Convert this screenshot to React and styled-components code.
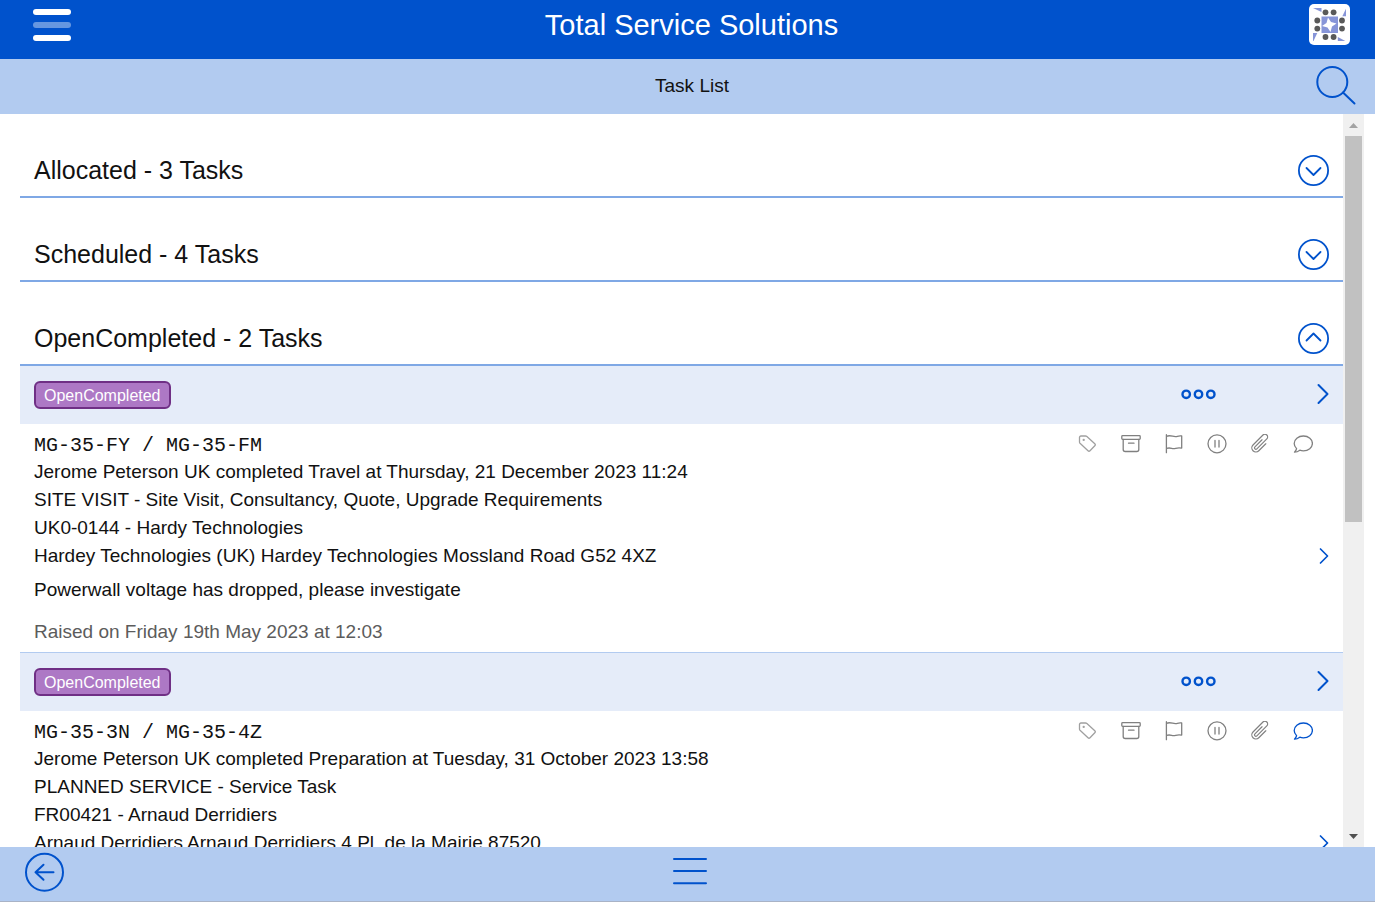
// Task list page with collapsible groups of tasks
import React, { useState } from "react"
import styled, { createGlobalStyle, ThemeProvider } from "styled-components"

const theme = {
  colors: {
    primary: "#0052cc",
    bar: "#b2cbf0",
    row: "#e5ecf9",
    line: "#7fa8e5",
    text: "#111111",
    muted: "#5c5c5c",
    icon: "#808080",
    white: "#ffffff",
    badge: "#ad78c5",
    badgeBorder: "#6f2f85",
  },
}

const GlobalStyle = createGlobalStyle`
  * {
    box-sizing: border-box;
  }

  body {
    margin: 0;
    background: #ffffff;
    color: #111111;
    font-family: "Liberation Sans", Arial, sans-serif;
    font-size: 19px;
    line-height: 28px;
  }

  h1, h2, p {
    margin: 0;
    font-weight: 400;
  }

  svg {
    display: block;
  }
`

const Page = styled.div`
  display: flex;
  flex-direction: column;
  height: 100vh;
`

const Bar = styled.div`
  display: grid;
  grid-template-columns: 1fr auto 1fr;
  align-items: center;
  flex: none;
  background: ${props => props.theme.colors.bar};
`

const Header = styled(Bar)`
  height: 59px;
  padding: 0 25px 10px 33px;
  background: ${props => props.theme.colors.primary};
  color: ${props => props.theme.colors.white};

  h1 {
    font-size: 29px;
  }
`

const SubHeader = styled(Bar)`
  height: 55px;
  padding: 0 19px 2px 28px;

  h2 {
    grid-column: 2;
    font-size: 19px;
  }
`

const Footer = styled(Bar)`
  height: 55px;
  padding: 0 20px 4px 25px;
  border-bottom: 1px solid #a9b3c6;
`

const IconButton = styled.button`
  display: block;
  justify-self: ${props => (props.$end ? "end" : "start")};
  padding: 0;
  border: none;
  background: none;
  color: ${props => props.theme.colors.primary};
  cursor: pointer;
`

const Content = styled.div`
  display: flex;
  flex: 1;
  min-height: 0;
  padding: 0 11px 0 20px;
`

const List = styled.main`
  flex: 1;
  min-width: 0;
  overflow-y: auto;
  scrollbar-width: none;
`

const ScrollBar = styled.div`
  display: flex;
  flex-direction: column;
  width: 21px;
  padding: 0 2px;
  background: #f0f0f0;
`

const ScrollArrow = styled.div`
  display: flex;
  flex: none;
  align-items: center;
  justify-content: center;
  height: 22px;
  color: ${props => (props.$active ? "#505050" : "#a3a3a3")};
`

const ScrollTrack = styled.div`
  flex: 1;
`

const ScrollThumb = styled.div`
  height: 56%;
  background: #c1c1c1;
`

const GroupHeader = styled.button`
  display: flex;
  align-items: center;
  justify-content: space-between;
  width: 100%;
  margin-top: 30px;
  padding: 10px 14px;
  border: none;
  border-bottom: 2px solid ${props => props.theme.colors.line};
  background: none;
  color: ${props => props.theme.colors.text};
  font-family: inherit;
  font-size: 25px;
  line-height: 32px;
  text-align: left;
  cursor: pointer;

  svg {
    color: ${props => props.theme.colors.primary};
  }
`

const Task = styled.article`
  & + & {
    border-top: 1px solid ${props => props.theme.colors.bar};
  }
`

const TaskBar = styled.div`
  display: flex;
  align-items: center;
  height: 58px;
  padding: 0 14px;
  background: ${props => props.theme.colors.row};
`

const Badge = styled.span`
  margin-right: auto;
  padding: 1px 8px 0;
  border: 2px solid ${props => props.theme.colors.badgeBorder};
  border-radius: 6px;
  background: ${props => props.theme.colors.badge};
  color: ${props => props.theme.colors.white};
  font-size: 16px;
  line-height: 23px;
`

const MoreButton = styled(IconButton)`
  margin-right: 101px;
`

const TaskBody = styled.div`
  padding: 10px 14px 6px;
`

const TopLine = styled.div`
  display: flex;
  justify-content: space-between;
  height: 24px;
`

const Reference = styled.p`
  font-family: "Liberation Mono", monospace;
  font-size: 20px;
  line-height: 24px;
`

const TaskIcons = styled.div`
  display: flex;
  gap: 23px;
  margin-right: 16px;
  color: ${props => props.theme.colors.icon};
`

const TaskIcon = styled.svg`
  width: 20px;
  height: 20px;
  fill: none;
  stroke: ${props =>
    props.$active ? props.theme.colors.primary : "currentColor"};
  stroke-width: 1.3;
  stroke-linecap: round;
  stroke-linejoin: round;
  opacity: ${props => (props.$faint ? 0.75 : 1)};
`

const AddressLine = styled.div`
  display: flex;
  align-items: center;
  justify-content: space-between;
`

const Description = styled.p`
  margin-top: 6px;
`

const Raised = styled.p`
  margin-top: 14px;
  color: ${props => props.theme.colors.muted};
`

const MenuIcon = () => (
  <svg width="38" height="32" viewBox="0 0 38 32" fill="#fff">
    <rect width="38" height="6" rx="3" />
    <rect y="13" width="38" height="6" rx="3" opacity="0.4" />
    <rect y="26" width="38" height="6" rx="3" />
  </svg>
)

const Logo = () => (
  <svg width="41" height="41" viewBox="0 0 41 41">
    <rect width="41" height="41" rx="5" fill="#fff" />
    <rect x="12.5" y="12.5" width="16.5" height="16.5" fill="#8795d8" />
    <path
      d="M19 13.500l3 4.500 5.500 1.500-4.500 3-1.500 5.500-3-4.500-5.500-1.500 4.500-3z"
      fill="#fff"
    />
    <g fill="#8795d8">
      <path d="M4 4h8.500v4z" />
      <path d="M37 4.700v7.600h-3.700z" />
      <path d="M4 29h4.300l-3.800 8h-.5z" />
      <path d="M28.800 33l7.500 4h-7.500z" />
    </g>
    <g fill="#595959">
      <circle cx="16.500" cy="8.300" r="2.900" />
      <circle cx="24.600" cy="8.300" r="2.900" />
      <circle cx="16.500" cy="33" r="2.900" />
      <circle cx="24.600" cy="33" r="2.900" />
      <circle cx="8.300" cy="16.500" r="2.900" />
      <circle cx="8.300" cy="24.600" r="2.900" />
      <circle cx="33" cy="16.500" r="2.900" />
      <circle cx="33" cy="24.600" r="2.900" />
    </g>
  </svg>
)

const SearchIcon = () => (
  <svg
    width="40"
    height="40"
    viewBox="0 1 40 40"
    fill="none"
    stroke="currentColor"
    strokeWidth="2"
    strokeLinecap="round"
  >
    <circle cx="16.300" cy="17" r="15" />
    <path d="M27 27.500l11.500 11" />
  </svg>
)

const BackIcon = () => (
  <svg
    width="40"
    height="40"
    viewBox="0 0 40 40"
    fill="none"
    stroke="currentColor"
    strokeWidth="2"
    strokeLinecap="round"
    strokeLinejoin="round"
  >
    <circle cx="19.500" cy="20.300" r="18.500" />
    <path d="M28.500 20.300h-18M18.500 12.800l-8 7.500 8 7.500" />
  </svg>
)

const LinesIcon = () => (
  <svg
    width="34"
    height="28"
    viewBox="0 0 34 28"
    stroke="currentColor"
    strokeWidth="2"
    strokeLinecap="round"
  >
    <path d="M1 1h32M1 13h32M1 25.300h32" />
  </svg>
)

const ToggleIcon = ({ open }) => (
  <svg
    width="31"
    height="31"
    viewBox="0 0 31 31"
    fill="none"
    stroke="currentColor"
    strokeWidth="1.800"
    strokeLinecap="round"
    strokeLinejoin="round"
  >
    <circle cx="15.500" cy="15.500" r="14.600" />
    <path d={open ? "M8.500 17.500l7-7 7 7" : "M8.500 13l7 7 7-7"} />
  </svg>
)

const Chevron = ({ small }) => (
  <svg
    width={small ? 10 : 12}
    height={small ? 16 : 20}
    viewBox={small ? "0 0 10 16" : "0 1 12 20"}
    fill="none"
    stroke="currentColor"
    strokeWidth={small ? 1.7 : 2}
    strokeLinecap="round"
    strokeLinejoin="round"
    overflow="visible"
  >
    <path d={small ? "M1.500 1l7 7-7 7" : "M1.500 1l9 9-9 9"} />
  </svg>
)

const MoreIcon = () => (
  <svg
    width="35"
    height="12"
    viewBox="0 0 35 12"
    fill="none"
    stroke="currentColor"
    strokeWidth="2.400"
  >
    <circle cx="5.200" cy="5.300" r="3.700" />
    <circle cx="17.500" cy="5.300" r="3.700" />
    <circle cx="29.800" cy="5.300" r="3.700" />
  </svg>
)

const StatusIcons = ({ hasComments }) => (
  <TaskIcons>
    <TaskIcon viewBox="0 1 20 20" $faint>
      <path d="M3 3h4.500q.8 0 1.400.5l7.900 7.300q1 1 0 2l-4.800 5q-1 1-2 0l-8-7.500q-.5-.5-.5-1.300v-4.500q0-1.500 1.500-1.500z" />
      <circle cx="5.700" cy="6.900" r=".5" />
    </TaskIcon>
    <TaskIcon viewBox="0 1 20 20">
      <rect x=".8" y="2.700" width="18.400" height="3.600" rx=".8" />
      <path d="M2.200 6.300v10.200q0 2 2 2h11.600q2 0 2-2v-10.200M7.500 10.200h5.500" />
    </TaskIcon>
    <TaskIcon viewBox="0 1 20 20" overflow="visible">
      <path d="M2.400 1.700v18M2.400 3.300c5-2 7 1.500 11 0 1.500-.6 2.800-.6 4.300-.4v12.200c-6-1.200-6 1.500-10 .3-2-.6-3.500-.5-5.300 0" />
    </TaskIcon>
    <TaskIcon viewBox="0 1 20 20">
      <circle cx="10" cy="10.800" r="9" />
      <path d="M8 7.500v6.500M12 7.500v6.500" />
    </TaskIcon>
    <TaskIcon viewBox="1 2 22 22">
      <path d="m18.375 12.739-7.693 7.693a4.500 4.500 0 0 1-6.364-6.364l10.940-10.940A3 3 0 1 1 19.500 7.372L8.552 18.320m5.698-9.951-7.810 7.810a1.500 1.500 0 0 0 2.112 2.130" />
    </TaskIcon>
    <TaskIcon viewBox="0 1 20 20" $active={hasComments}>
      <path d="M3.600 15.600C2.200 14.200 1.200 12.400 1.200 10.400c0-4.100 4-7.400 9.200-7.400s9 3.300 9 7.400-4 7.400-9 7.400c-1.300 0-2.500-.2-3.600-.6-1.700 1.400-3.500 2-5.300 2 .9-1 1.800-2.200 2.100-3.600z" />
    </TaskIcon>
  </TaskIcons>
)

const groups = [
  { name: "Allocated", count: 3, tasks: [] },
  { name: "Scheduled", count: 4, tasks: [] },
  {
    name: "OpenCompleted",
    count: 2,
    open: true,
    tasks: [
      {
        reference: "MG-35-FY / MG-35-FM",
        progress:
          "Jerome Peterson UK completed Travel at Thursday, 21 December 2023 11:24",
        type: "SITE VISIT - Site Visit, Consultancy, Quote, Upgrade Requirements",
        customer: "UK0-0144 - Hardy Technologies",
        address:
          "Hardey Technologies (UK) Hardey Technologies Mossland Road G52 4XZ",
        description: "Powerwall voltage has dropped, please investigate",
        raised: "Raised on Friday 19th May 2023 at 12:03",
      },
      {
        reference: "MG-35-3N / MG-35-4Z",
        progress:
          "Jerome Peterson UK completed Preparation at Tuesday, 31 October 2023 13:58",
        type: "PLANNED SERVICE - Service Task",
        customer: "FR00421 - Arnaud Derridiers",
        address: "Arnaud Derridiers Arnaud Derridiers 4 Pl. de la Mairie 87520",
        hasComments: true,
      },
    ],
  },
]

const TaskCard = ({ task, status }) => (
  <Task>
    <TaskBar>
      <Badge>{status}</Badge>
      <MoreButton type="button" aria-label="More actions">
        <MoreIcon />
      </MoreButton>
      <IconButton type="button" aria-label="Open task">
        <Chevron />
      </IconButton>
    </TaskBar>
    <TaskBody>
      <TopLine>
        <Reference>{task.reference}</Reference>
        <StatusIcons hasComments={task.hasComments} />
      </TopLine>
      <p>{task.progress}</p>
      <p>{task.type}</p>
      <p>{task.customer}</p>
      <AddressLine>
        <p>{task.address}</p>
        <IconButton type="button" aria-label="Open address">
          <Chevron small />
        </IconButton>
      </AddressLine>
      {task.description && <Description>{task.description}</Description>}
      {task.raised && <Raised>{task.raised}</Raised>}
    </TaskBody>
  </Task>
)

const Group = ({ group }) => {
  const [open, setOpen] = useState(Boolean(group.open))

  return (
    <section>
      <GroupHeader
        type="button"
        aria-expanded={open}
        onClick={() => setOpen(!open)}
      >
        {`${group.name} - ${group.count} Tasks`}
        <ToggleIcon open={open} />
      </GroupHeader>
      {open &&
        group.tasks.map(task => (
          <TaskCard key={task.reference} task={task} status={group.name} />
        ))}
    </section>
  )
}

const App = () => (
  <ThemeProvider theme={theme}>
    <GlobalStyle />
    <Page>
      <Header as="header">
        <IconButton type="button" aria-label="Menu">
          <MenuIcon />
        </IconButton>
        <h1>Total Service Solutions</h1>
        <IconButton type="button" aria-label="Home" $end>
          <Logo />
        </IconButton>
      </Header>
      <SubHeader>
        <h2>Task List</h2>
        <IconButton type="button" aria-label="Search" $end>
          <SearchIcon />
        </IconButton>
      </SubHeader>
      <Content>
        <List>
          {groups.map(group => (
            <Group key={group.name} group={group} />
          ))}
        </List>
        <ScrollBar aria-hidden="true">
          <ScrollArrow>
            <svg width="9" height="5" viewBox="0 0 9 5" fill="currentColor">
              <path d="M0 5L4.500 0 9 5z" />
            </svg>
          </ScrollArrow>
          <ScrollTrack>
            <ScrollThumb />
          </ScrollTrack>
          <ScrollArrow $active>
            <svg width="9" height="5" viewBox="0 0 9 5" fill="currentColor">
              <path d="M0 0h9L4.500 5z" />
            </svg>
          </ScrollArrow>
        </ScrollBar>
      </Content>
      <Footer as="footer">
        <IconButton type="button" aria-label="Back">
          <BackIcon />
        </IconButton>
        <IconButton type="button" aria-label="Options">
          <LinesIcon />
        </IconButton>
      </Footer>
    </Page>
  </ThemeProvider>
)

export default App
